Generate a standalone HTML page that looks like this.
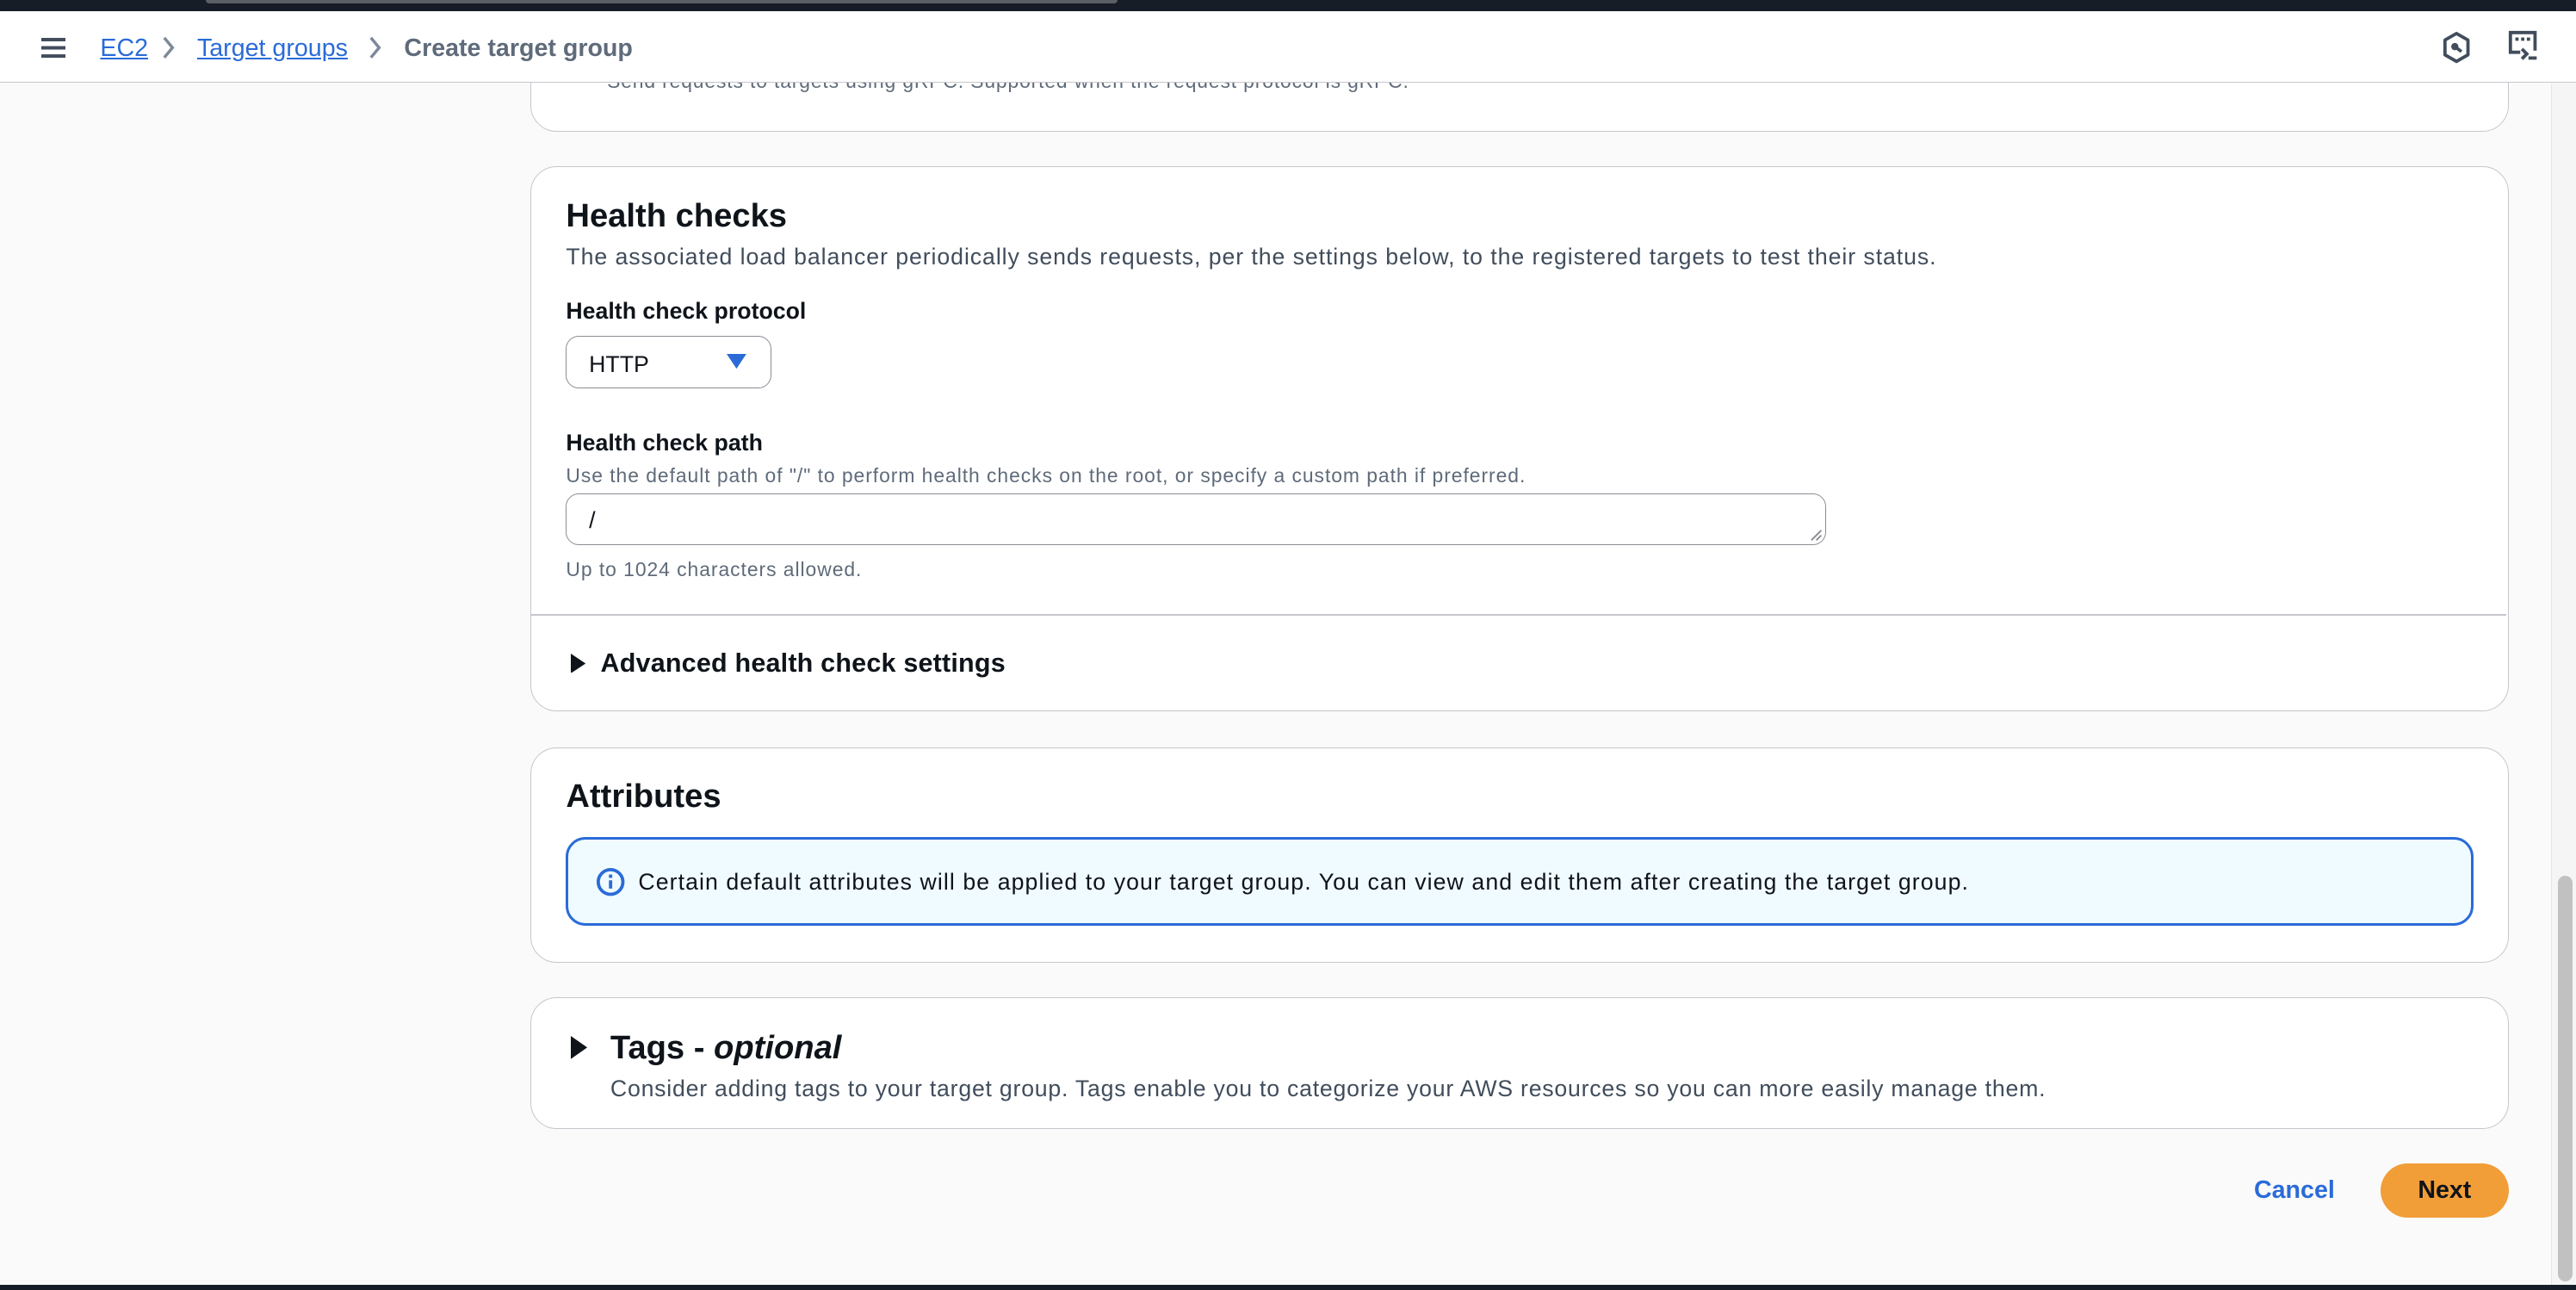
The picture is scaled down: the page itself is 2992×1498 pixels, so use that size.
<!DOCTYPE html>
<html><head><meta charset="utf-8">
<style>
html,body{margin:0;padding:0;width:2992px;height:1498px;overflow:hidden;background:#fafafa}
#w{zoom:1.90816;position:relative;width:1568px;height:785px;font-family:"Liberation Sans",sans-serif;color:#0f141a;background:#fafafa;overflow:hidden}
.a{position:absolute;white-space:nowrap}
.card{position:absolute;left:323px;width:1204px;background:#fff;border:1px solid #c6c6cd;border-radius:16px;box-sizing:border-box}
.h2{font-size:20px;font-weight:bold;line-height:24px}
.t14{font-size:14px;line-height:18px}
.t12{font-size:12px;line-height:16px;color:#5f6b7a;letter-spacing:0.5px}
.lb{font-size:14px;font-weight:bold;line-height:18px}
</style></head><body><div id="w">
<div class="a" style="left:0;top:0;width:1568px;height:7px;background:#161d26"></div>
<div class="a" style="left:125px;top:0;width:555px;height:2px;background:#5a5f66;border-radius:0 0 3px 3px"></div>

<div class="card" style="top:20px;height:60px;">
<div class="a" style="left:46px;top:22px;font-size:12px;color:#5f6b7a;letter-spacing:0.45px">Send requests to targets using gRPC. Supported when the request protocol is gRPC.</div>
</div>

<div class="a" style="left:0;top:7px;width:1568px;height:43px;background:#fff;border-bottom:1px solid #c6c6cd"></div>
<div class="a" style="left:25px;top:23px;width:15px;height:2px;background:#414d5c;box-shadow:0 5px 0 #414d5c,0 10px 0 #414d5c"></div>
<div class="a" style="left:61px;top:21px;font-size:15px;color:#2a6bd8;text-decoration:underline">EC2</div>
<svg class="a" style="left:98px;top:22px" width="10" height="14"><path d="M2 1l5 6-5 6" stroke="#7d8998" stroke-width="1.8" fill="none"/></svg>
<div class="a" style="left:120px;top:21px;font-size:15px;color:#2a6bd8;text-decoration:underline">Target groups</div>
<svg class="a" style="left:224px;top:22px" width="10" height="14"><path d="M2 1l5 6-5 6" stroke="#7d8998" stroke-width="1.8" fill="none"/></svg>
<div class="a" style="left:246px;top:21px;font-size:15px;font-weight:bold;color:#5f6b7a">Create target group</div>
<svg class="a" style="left:1486px;top:19px" width="18" height="20" viewBox="0 0 18 20"><path d="M9 1.5l7 4v9l-7 4-7-4v-9z" stroke="#414d5c" stroke-width="2" fill="none" stroke-linejoin="round"/><circle cx="8" cy="9.5" r="2.2" fill="#414d5c"/><path d="M8 9.5l4 3" stroke="#414d5c" stroke-width="2"/></svg>
<svg class="a" style="left:1526px;top:18px" width="20" height="20" viewBox="0 0 20 20"><path d="M8 14H2V2h15v11" stroke="#414d5c" stroke-width="2" fill="none"/><rect x="5" y="5" width="2" height="2" fill="#414d5c"/><rect x="8.5" y="5" width="2" height="2" fill="#414d5c"/><rect x="12" y="5" width="2" height="2" fill="#414d5c"/><path d="M9 12l3 3-3 3" stroke="#414d5c" stroke-width="2" fill="none"/><rect x="13" y="16.5" width="5" height="2" fill="#414d5c"/></svg>

<div class="card" style="top:101px;height:332px;">
<div class="a h2" style="left:21px;top:18px">Health checks</div>
<div class="a t14" style="left:21px;top:46px;color:#414d5c;letter-spacing:0.48px">The associated load balancer periodically sends requests, per the settings below, to the registered targets to test their status.</div>
<div class="a lb" style="left:21px;top:79px">Health check protocol</div>
<div class="a" style="left:21px;top:103px;width:125px;height:32px;border:1px solid #8c8c94;border-radius:8px;box-sizing:border-box"></div>
<div class="a t14" style="left:35px;top:111px">HTTP</div>
<svg class="a" style="left:119px;top:114px" width="12" height="10"><path d="M0 0h12L6 9z" fill="#2a6bd8"/></svg>
<div class="a lb" style="left:21px;top:159px">Health check path</div>
<div class="a t12" style="left:21px;top:180px">Use the default path of "/" to perform health checks on the root, or specify a custom path if preferred.</div>
<div class="a" style="left:21px;top:199px;width:767px;height:31px;border:1px solid #8c8c94;border-radius:8px;box-sizing:border-box"></div>
<div class="a t14" style="left:35px;top:206px">/</div>
<svg class="a" style="left:778px;top:220px" width="8" height="8"><path d="M7 1L1 7M7 4L4 7" stroke="#8c8c94" stroke-width="1"/></svg>
<div class="a t12" style="left:21px;top:237px">Up to 1024 characters allowed.</div>
<div class="a" style="left:0;top:272px;width:1202px;height:1px;background:#c6c6cd"></div>
<svg class="a" style="left:24px;top:296px" width="10" height="12"><path d="M0 0l9 6-9 6z" fill="#0f141a"/></svg>
<div class="a" style="left:42px;top:292px;font-size:16px;font-weight:bold;line-height:20px;letter-spacing:0.1px">Advanced health check settings</div>
</div>

<div class="card" style="top:455px;height:131px;">
<div class="a h2" style="left:21px;top:17px">Attributes</div>
<div class="a" style="left:21px;top:54px;width:1161px;height:54px;border:2px solid #2a6bd8;background:#f0fbff;border-radius:12px;box-sizing:border-box"></div>
<svg class="a" style="left:39px;top:72px" width="18" height="18" viewBox="0 0 18 18"><circle cx="9" cy="9" r="7.5" stroke="#2a6bd8" stroke-width="2" fill="none"/><rect x="8" y="8" width="2" height="5" fill="#2a6bd8"/><rect x="8" y="4.5" width="2" height="2" fill="#2a6bd8"/></svg>
<div class="a t14" style="left:65px;top:72px;letter-spacing:0.56px">Certain default attributes will be applied to your target group. You can view and edit them after creating the target group.</div>
</div>

<div class="card" style="top:607px;height:80px;">
<svg class="a" style="left:24px;top:23px" width="11" height="14"><path d="M0 0l10 7-10 7z" fill="#0f141a"/></svg>
<div class="a h2" style="left:48px;top:18px">Tags - <i>optional</i></div>
<div class="a t14" style="left:48px;top:46px;color:#414d5c;letter-spacing:0.4px">Consider adding tags to your target group. Tags enable you to categorize your AWS resources so you can more easily manage them.</div>
</div>

<div class="a" style="left:1372px;top:716px;font-size:15px;font-weight:bold;color:#2a6bd8">Cancel</div>
<div class="a" style="left:1449px;top:708px;width:78px;height:33px;background:#f29e38;border-radius:17px;text-align:center;line-height:33px;font-size:15px;font-weight:bold">Next</div>

<div class="a" style="left:1553px;top:51px;width:15px;height:731px;background:#f5f5f5;border-left:1px solid #e4e4e4"></div>
<div class="a" style="left:1557px;top:533px;width:9px;height:247px;background:#c1c1c1;border-radius:5px"></div>
<div class="a" style="left:0;top:782px;width:1568px;height:3px;background:#161d26"></div>
</div></body></html>
